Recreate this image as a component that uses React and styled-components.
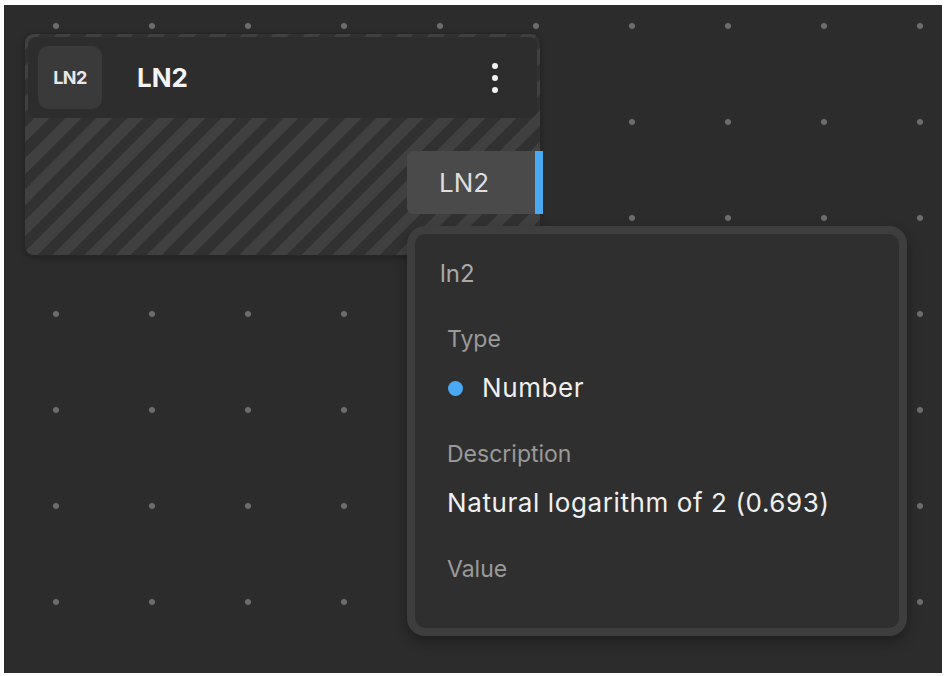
import React from "react"
import styled, { createGlobalStyle } from "styled-components"

const GlobalStyle = createGlobalStyle`
  html, body {
    margin: 0;
    padding: 0;
    background: #ffffff;
  }
  body {
    font-family: Inter, "Noto Sans", "Liberation Sans", sans-serif;
  }
`

const Page = styled.div`
  padding: 5px 4px;
  width: 946px;
  height: 676px;
  box-sizing: border-box;
`

const Canvas = styled.div`
  position: relative;
  width: 938px;
  height: 668px;
  overflow: hidden;
  background-color: #2c2c2c;
  background-image: radial-gradient(circle at 4px 4px, #6c6c6c 2.6px, transparent 3.4px);
  background-size: 96px 96px;
  background-position: 48px 17px;
`

const Node = styled.div`
  position: absolute;
  left: 20px;
  top: 28px;
  width: 517px;
  height: 223px;
  box-sizing: border-box;
  border-radius: 10px;
  border: 1px solid #262626;
  padding: 3px 3px 0;
  background: repeating-linear-gradient(
    135deg,
    #404040 0px,
    #404040 11px,
    #313131 11px,
    #313131 22px
  );
  box-shadow: 0 2px 6px rgba(0, 0, 0, 0.25);
`

const Header = styled.div`
  display: flex;
  align-items: center;
  height: 81px;
  padding: 0 30px 0 10px;
  box-sizing: border-box;
  border-radius: 8px;
  background: #2d2d2d;
`

const IconBox = styled.div`
  width: 64px;
  height: 63px;
  border-radius: 10px;
  background: #3a3a3a;
  display: flex;
  align-items: center;
  justify-content: center;
  color: #e8e8e8;
  font-size: 18px;
  font-weight: 700;
  letter-spacing: -0.5px;
`

const Title = styled.div`
  margin-left: 35px;
  flex: 1;
  color: #f4f4f4;
  font-size: 26px;
  font-weight: 700;
`

const Kebab = styled.div`
  width: 24px;
  display: flex;
  flex-direction: column;
  align-items: center;
  gap: 6px;
`

const KebabDot = styled.span`
  width: 6px;
  height: 6px;
  border-radius: 50%;
  background: #f2f2f2;
`

const Port = styled.div`
  position: absolute;
  left: 382px;
  top: 117px;
  display: flex;
  align-items: stretch;
  height: 63px;
`

const PortLabel = styled.div`
  width: 128px;
  box-sizing: border-box;
  padding-left: 32px;
  display: flex;
  align-items: center;
  background: #4a4a4a;
  border-radius: 6px 0 0 6px;
  color: #dedede;
  font-size: 26px;
`

const PortBar = styled.div`
  width: 8px;
  background: #4aa9f3;
`

const Tooltip = styled.div`
  position: absolute;
  left: 403px;
  top: 221px;
  width: 500px;
  height: 410px;
  box-sizing: border-box;
  border: 8px solid #3e3e3e;
  border-radius: 18px;
  background: #2f2f2f;
  padding: 25px 25px 0;
  display: flex;
  flex-direction: column;
  gap: 35px;
  box-shadow: 0 6px 14px rgba(0, 0, 0, 0.3);
`

const TipTitle = styled.div`
  color: #a9a9a9;
  font-size: 24px;
  line-height: 30px;
`

const Section = styled.div`
  display: flex;
  flex-direction: column;
  gap: 18px;
  padding-left: 7px;
`

const Label = styled.div`
  color: #9a9a9a;
  font-size: 23px;
  line-height: 30px;
`

const Value = styled.div`
  display: flex;
  align-items: center;
  gap: 19px;
  color: #f0f0f0;
  font-size: 26px;
  line-height: 32px;
  letter-spacing: 0.6px;
`

const TypeDot = styled.span`
  width: 15px;
  height: 15px;
  border-radius: 50%;
  background: ${p => p.color};
  margin-left: 1px;
`

export default function App() {
  return (
    <>
      <GlobalStyle />
      <Page>
        <Canvas>
          <Node>
            <Header>
              <IconBox>LN2</IconBox>
              <Title>LN2</Title>
              <Kebab>
                <KebabDot />
                <KebabDot />
                <KebabDot />
              </Kebab>
            </Header>
            <Port>
              <PortLabel>LN2</PortLabel>
              <PortBar />
            </Port>
          </Node>
          <Tooltip>
            <TipTitle>ln2</TipTitle>
            <Section>
              <Label>Type</Label>
              <Value>
                <TypeDot color="#4aa9f3" />
                Number
              </Value>
            </Section>
            <Section>
              <Label>Description</Label>
              <Value>Natural logarithm of 2 (0.693)</Value>
            </Section>
            <Section>
              <Label>Value</Label>
            </Section>
          </Tooltip>
        </Canvas>
      </Page>
    </>
  )
}
